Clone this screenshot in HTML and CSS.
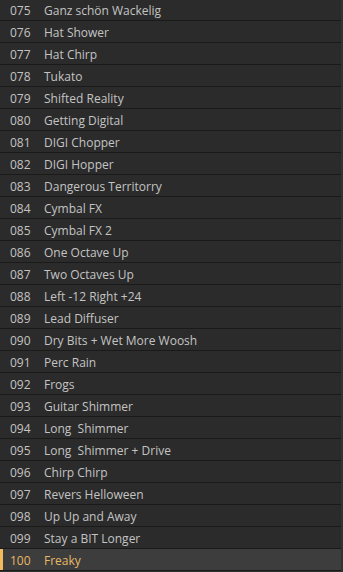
FILE: index.html
```html
<!DOCTYPE html>
<html>
<head>
<meta charset="utf-8">
<link rel="stylesheet" href="styles.css">
</head>
<body>
<div class="panel">
  <ul class="list">
    <li class="row"><span class="num">075</span><span class="name">Ganz schön Wackelig</span></li>
    <li class="row"><span class="num">076</span><span class="name">Hat Shower</span></li>
    <li class="row"><span class="num">077</span><span class="name">Hat Chirp</span></li>
    <li class="row"><span class="num">078</span><span class="name">Tukato</span></li>
    <li class="row"><span class="num">079</span><span class="name">Shifted Reality</span></li>
    <li class="row"><span class="num">080</span><span class="name">Getting Digital</span></li>
    <li class="row"><span class="num">081</span><span class="name">DIGI Chopper</span></li>
    <li class="row"><span class="num">082</span><span class="name">DIGI Hopper</span></li>
    <li class="row"><span class="num">083</span><span class="name">Dangerous Territorry</span></li>
    <li class="row"><span class="num">084</span><span class="name">Cymbal FX</span></li>
    <li class="row"><span class="num">085</span><span class="name">Cymbal FX 2</span></li>
    <li class="row"><span class="num">086</span><span class="name">One Octave Up</span></li>
    <li class="row"><span class="num">087</span><span class="name">Two Octaves Up</span></li>
    <li class="row"><span class="num">088</span><span class="name">Left -12 Right +24</span></li>
    <li class="row"><span class="num">089</span><span class="name">Lead Diffuser</span></li>
    <li class="row"><span class="num">090</span><span class="name">Dry Bits + Wet More Woosh</span></li>
    <li class="row"><span class="num">091</span><span class="name">Perc Rain</span></li>
    <li class="row"><span class="num">092</span><span class="name">Frogs</span></li>
    <li class="row"><span class="num">093</span><span class="name">Guitar Shimmer</span></li>
    <li class="row"><span class="num">094</span><span class="name">Long  Shimmer</span></li>
    <li class="row"><span class="num">095</span><span class="name">Long  Shimmer + Drive</span></li>
    <li class="row"><span class="num">096</span><span class="name">Chirp Chirp</span></li>
    <li class="row"><span class="num">097</span><span class="name">Revers Helloween</span></li>
    <li class="row"><span class="num">098</span><span class="name">Up Up and Away</span></li>
    <li class="row"><span class="num">099</span><span class="name">Stay a BIT Longer</span></li>
    <li class="row selected"><span class="num">100</span><span class="name">Freaky</span></li>
  </ul>
</div>
</body>
</html>
```

FILE: styles.css
```css
html, body {
  margin: 0;
  padding: 0;
  background: #2a2a2a;
  overflow: hidden;
}

.panel {
  width: 343px;
  height: 572px;
  overflow: hidden;
  background: #323232;
  padding-right: 2px;
  box-sizing: border-box;
}

.list {
  list-style: none;
  margin: -1px 0 0 0;
  padding: 0;
}

.row {
  display: flex;
  align-items: center;
  height: 20px;
  padding-top: 1px;
  border-bottom: 1px solid #1a1a1a;
  background: #2b2b2b;
  padding-left: 10px;
  box-sizing: content-box;
  font-family: "Open Sans", "Noto Sans", sans-serif;
  font-size: 12px;
  color: #c4c4c4;
  white-space: pre;
}

.num {
  width: 34px;
  flex: none;
}

.name {
  flex: 1;
}

.row.selected {
  background: #3d3d3d;
  color: #e8b866;
  box-shadow: inset 3px 0 0 #f2bb5c;
}
```
